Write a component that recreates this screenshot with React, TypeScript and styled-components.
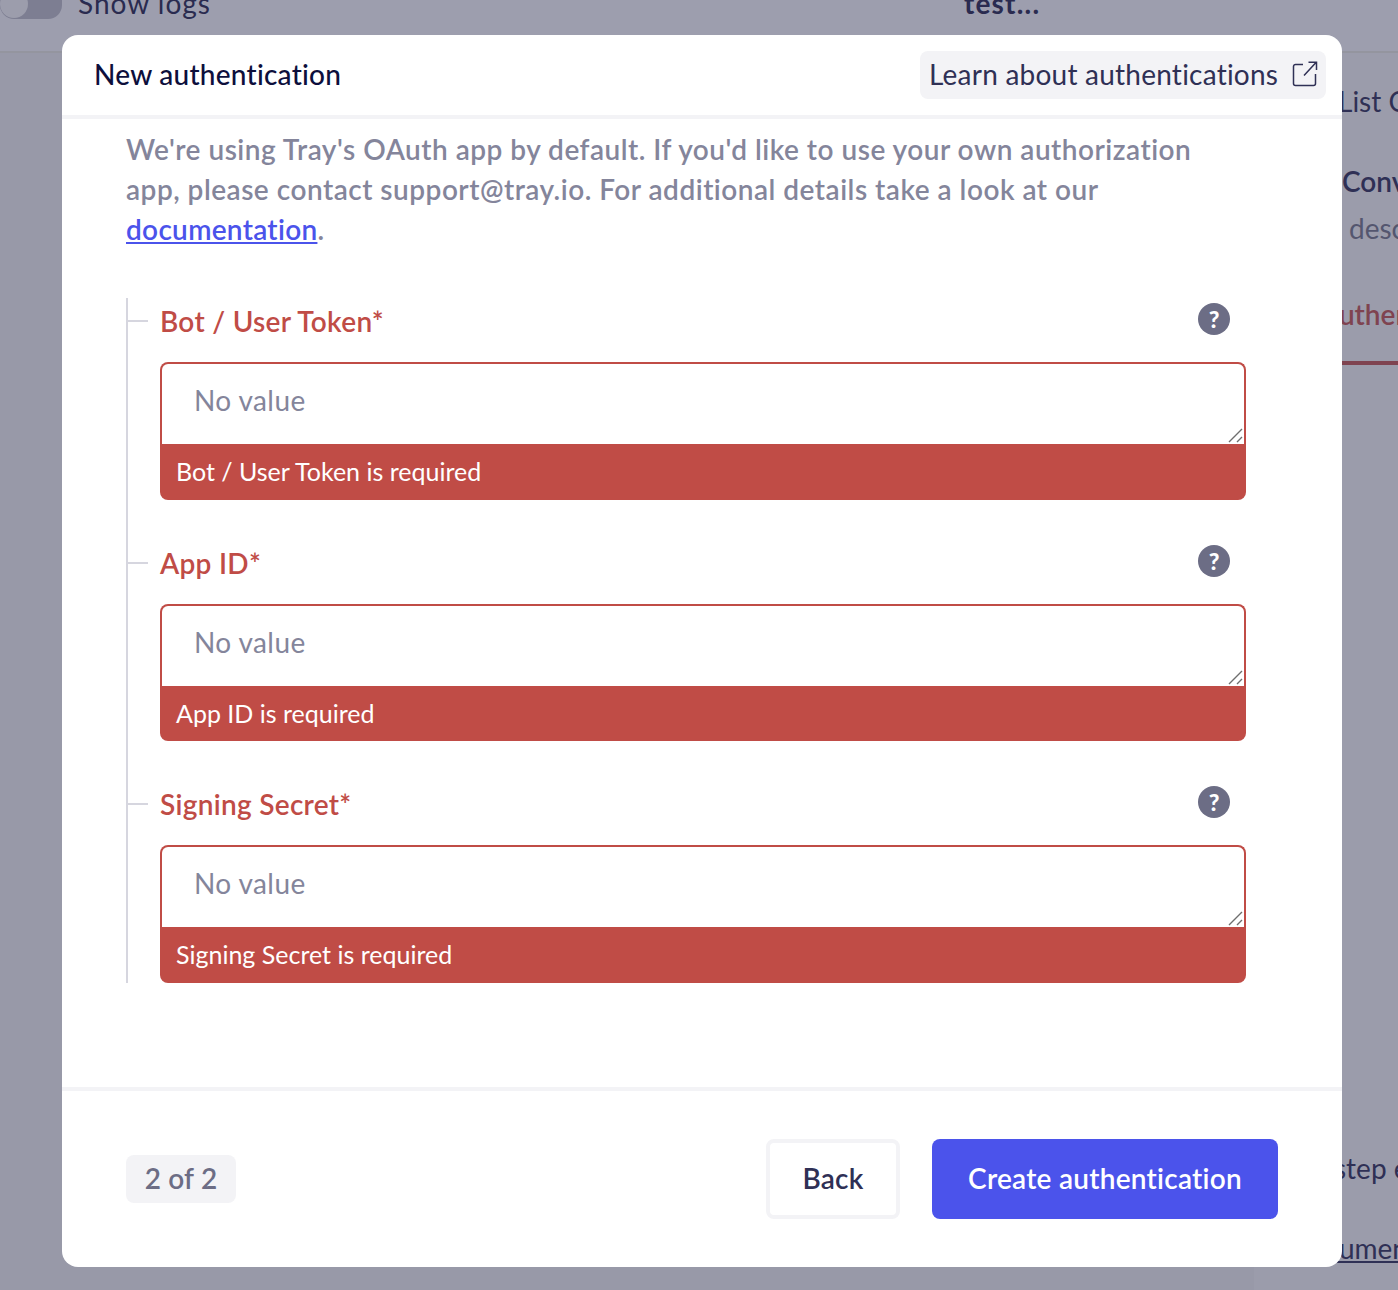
import React from 'react';
import styled, { createGlobalStyle } from 'styled-components';

const GlobalStyle = createGlobalStyle`
  html, body {
    margin: 0;
    padding: 0;
    background: #9899a8;
  }
  * {
    box-sizing: border-box;
  }
`;

const fontStack = `'Lato', 'Noto Sans', sans-serif`;

const Page = styled.div`
  position: relative;
  width: 1398px;
  height: 1290px;
  overflow: hidden;
  font-family: ${fontStack};
  font-variant-ligatures: none;
  background: #9899a8;
`;

const TopBar = styled.div`
  height: 53px;
  display: flex;
  align-items: flex-end;
  border-bottom: 2px solid #94959f;
  background: #9d9eae;
  color: #2a2b50;
  font-size: 28px;
  line-height: 30px;
  padding-bottom: 33px;
`;

const Toggle = styled.div`
  width: 62px;
  height: 19px;
  flex: none;
  margin-bottom: -28px;
  align-self: flex-start;
  border-radius: 0 0 14px 14px;
  background: #7d7e92;
  overflow: hidden;

  &::before {
    content: '';
    display: block;
    width: 28px;
    height: 28px;
    margin-top: -10px;
    border-radius: 50%;
    background: #9c9dac;
  }
`;

const LogsLabel = styled.span`
  margin-left: 16px;
  letter-spacing: 1px;
`;

const TestLabel = styled.span`
  margin-left: 753px;
  font-weight: 700;
  letter-spacing: 1.2px;
`;

const SidePanel = styled.div`
  height: 1237px;
  margin-left: 1254px;
  padding-top: 33px;
  color: #2f3055;
  font-size: 28px;
  line-height: 30px;
  white-space: nowrap;
  overflow: hidden;
  background: #9b9cab;
`;

const SideLine = styled.div<{ $top: number; $left: number; $color?: string; $weight?: number }>`
  margin-top: ${(p) => p.$top}px;
  padding-left: ${(p) => p.$left}px;
  color: ${(p) => p.$color || '#2f3055'};
  font-weight: ${(p) => p.$weight || 400};
`;

const SideTabRule = styled.div`
  height: 4px;
  margin-top: 32px;
  background: #7f4350;
`;

const SideLink = styled(SideLine)`
  text-decoration: underline;
`;

const Modal = styled.div`
  position: absolute;
  left: 62px;
  top: 35px;
  width: 1280px;
  height: 1232px;
  background: #fff;
  border-radius: 16px;
  display: flex;
  flex-direction: column;
`;

const ModalHeader = styled.header`
  height: 84px;
  flex: none;
  display: flex;
  align-items: flex-start;
  justify-content: space-between;
  padding: 16px 16px 0 32px;
  border-bottom: 4px solid #f3f3f6;
`;

const ModalTitle = styled.h2`
  margin: 0;
  font-size: 28px;
  line-height: 46px;
  font-weight: 500;
  color: #0d0f3c;
  letter-spacing: 0.25px;
`;

const LearnLink = styled.a`
  width: 406px;
  height: 48px;
  display: flex;
  align-items: center;
  justify-content: space-between;
  padding: 0 8px 3px 9px;
  background: #f3f3f6;
  border-radius: 8px;
  color: #2f3055;
  font-size: 28px;
  letter-spacing: 0.23px;
`;

const ModalBody = styled.div`
  flex: 1;
  padding: 10px 96px 0 64px;
`;

const Intro = styled.p`
  margin: 0;
  max-width: 1075px;
  font-size: 28px;
  line-height: 40px;
  font-weight: 600;
  color: #84859b;
  letter-spacing: 0.5px;
`;

const DocLink = styled.a`
  color: #4b53eb;
  text-decoration: underline;
  letter-spacing: 0.3px;
`;

const FieldTree = styled.div`
  margin-top: 49px;
  border-left: 2px solid #d6d6df;
  padding-left: 32px;
  display: flex;
  flex-direction: column;
  gap: 40px;
`;

const Field = styled.div`
  position: relative;
`;

const FieldHead = styled.div`
  height: 44px;
  display: flex;
  align-items: flex-start;
  justify-content: space-between;
  padding-right: 16px;
  margin-bottom: 20px;
`;

const Label = styled.label`
  font-size: 28px;
  line-height: 46px;
  font-weight: 600;
  color: #c04c46;
  letter-spacing: 0.3px;

  &::before {
    content: '';
    position: absolute;
    left: -32px;
    top: 22px;
    width: 20px;
    height: 2px;
    background: #d6d6df;
  }
`;

const HelpBadge = styled.span`
  width: 32px;
  height: 32px;
  margin-top: 5px;
  border-radius: 50%;
  background: #6c6d85;
  color: #fff;
  display: flex;
  align-items: center;
  justify-content: center;
  font-size: 23px;
  font-weight: 900;
`;

const InputShell = styled.div`
  position: relative;
  height: 82px;
  border: 2px solid #c04c46;
  border-bottom: 0;
  border-radius: 8px 8px 0 0;
  padding: 0 32px;
  font-size: 28px;
  line-height: 73px;
  color: #84859b;
  letter-spacing: 0.4px;
`;

const Grip = styled.svg`
  position: absolute;
  right: 1px;
  bottom: 1px;
`;

const ErrorBar = styled.div`
  height: 55.5px;
  padding: 0 16px;
  border-radius: 0 0 8px 8px;
  background: #c04c46;
  color: #fff;
  font-size: 25px;
  line-height: 54px;
`;

const ModalFooter = styled.footer`
  height: 180px;
  flex: none;
  display: flex;
  align-items: center;
  justify-content: space-between;
  padding: 0 64px;
  border-top: 4px solid #f3f3f6;
`;

const StepChip = styled.span`
  width: 110px;
  height: 48px;
  display: flex;
  align-items: center;
  justify-content: center;
  padding-bottom: 2px;
  background: #f3f3f6;
  border-radius: 8px;
  color: #6c6d85;
  font-size: 28px;
  font-weight: 600;
  letter-spacing: 0.2px;
`;

const Actions = styled.div`
  display: flex;
  gap: 32px;
`;

const Button = styled.button<{ $primary?: boolean }>`
  width: ${(p) => (p.$primary ? 346 : 134)}px;
  height: 80px;
  padding: 0 0 2px;
  border-radius: 8px;
  border: ${(p) => (p.$primary ? '0' : '4px solid #f3f3f6')};
  background: ${(p) => (p.$primary ? '#4b53eb' : '#fff')};
  color: ${(p) => (p.$primary ? '#fff' : '#2f3055')};
  font-family: ${fontStack};
  font-variant-ligatures: none;
  font-size: 28px;
  font-weight: 600;
  letter-spacing: 0.25px;
`;

const fields = [
  { label: 'Bot / User Token' },
  { label: 'App ID' },
  { label: 'Signing Secret' },
];

const ExternalIcon = () => (
  <svg width="26" height="26" viewBox="0 0 26 26" fill="none" stroke="#2f3055" strokeWidth="1.5">
    <path d="M11 3.5H3.5a2 2 0 0 0-2 2V22.5a2 2 0 0 0 2 2H21.5a2 2 0 0 0 2-2V13" />
    <path d="M12 14.5L24 1.5M16.5 1.2H24.5V9" />
  </svg>
);

export default function App() {
  return (
    <Page>
      <GlobalStyle />
      <TopBar>
        <Toggle />
        <LogsLabel>Show logs</LogsLabel>
        <TestLabel>test...</TestLabel>
      </TopBar>
      <SidePanel>
        <SideLine $top={0} $left={84}>List Conversations</SideLine>
        <SideLine $top={50} $left={88} $weight={600}>Conversations</SideLine>
        <SideLine $top={17} $left={95} $color="#54566f">description</SideLine>
        <SideLine $top={56} $left={66} $color="#7f4350" $weight={600}>Authentication</SideLine>
        <SideTabRule />
        <SideLine $top={788} $left={80}>step each</SideLine>
        <SideLink $top={50} $left={40}>documentation</SideLink>
      </SidePanel>

      <Modal>
        <ModalHeader>
          <ModalTitle>New authentication</ModalTitle>
          <LearnLink>
            Learn about authentications
            <ExternalIcon />
          </LearnLink>
        </ModalHeader>
        <ModalBody>
          <Intro>
            We're using Tray's OAuth app by default. If you'd like to use your own authorization
            app, please contact support@tray.io. For additional details take a look at our{' '}
            <DocLink>documentation</DocLink>.
          </Intro>
          <FieldTree>
            {fields.map((field) => (
              <Field key={field.label}>
                <FieldHead>
                  <Label>{field.label}*</Label>
                  <HelpBadge>?</HelpBadge>
                </FieldHead>
                <InputShell>
                  No value
                  <Grip width="16" height="16" viewBox="0 0 16 16" stroke="#6e6e6e" strokeWidth="1.4">
                    <path d="M2 15L15 2M10 15L15 10" />
                  </Grip>
                </InputShell>
                <ErrorBar>{field.label} is required</ErrorBar>
              </Field>
            ))}
          </FieldTree>
        </ModalBody>
        <ModalFooter>
          <StepChip>2 of 2</StepChip>
          <Actions>
            <Button>Back</Button>
            <Button $primary>Create authentication</Button>
          </Actions>
        </ModalFooter>
      </Modal>
    </Page>
  );
}
